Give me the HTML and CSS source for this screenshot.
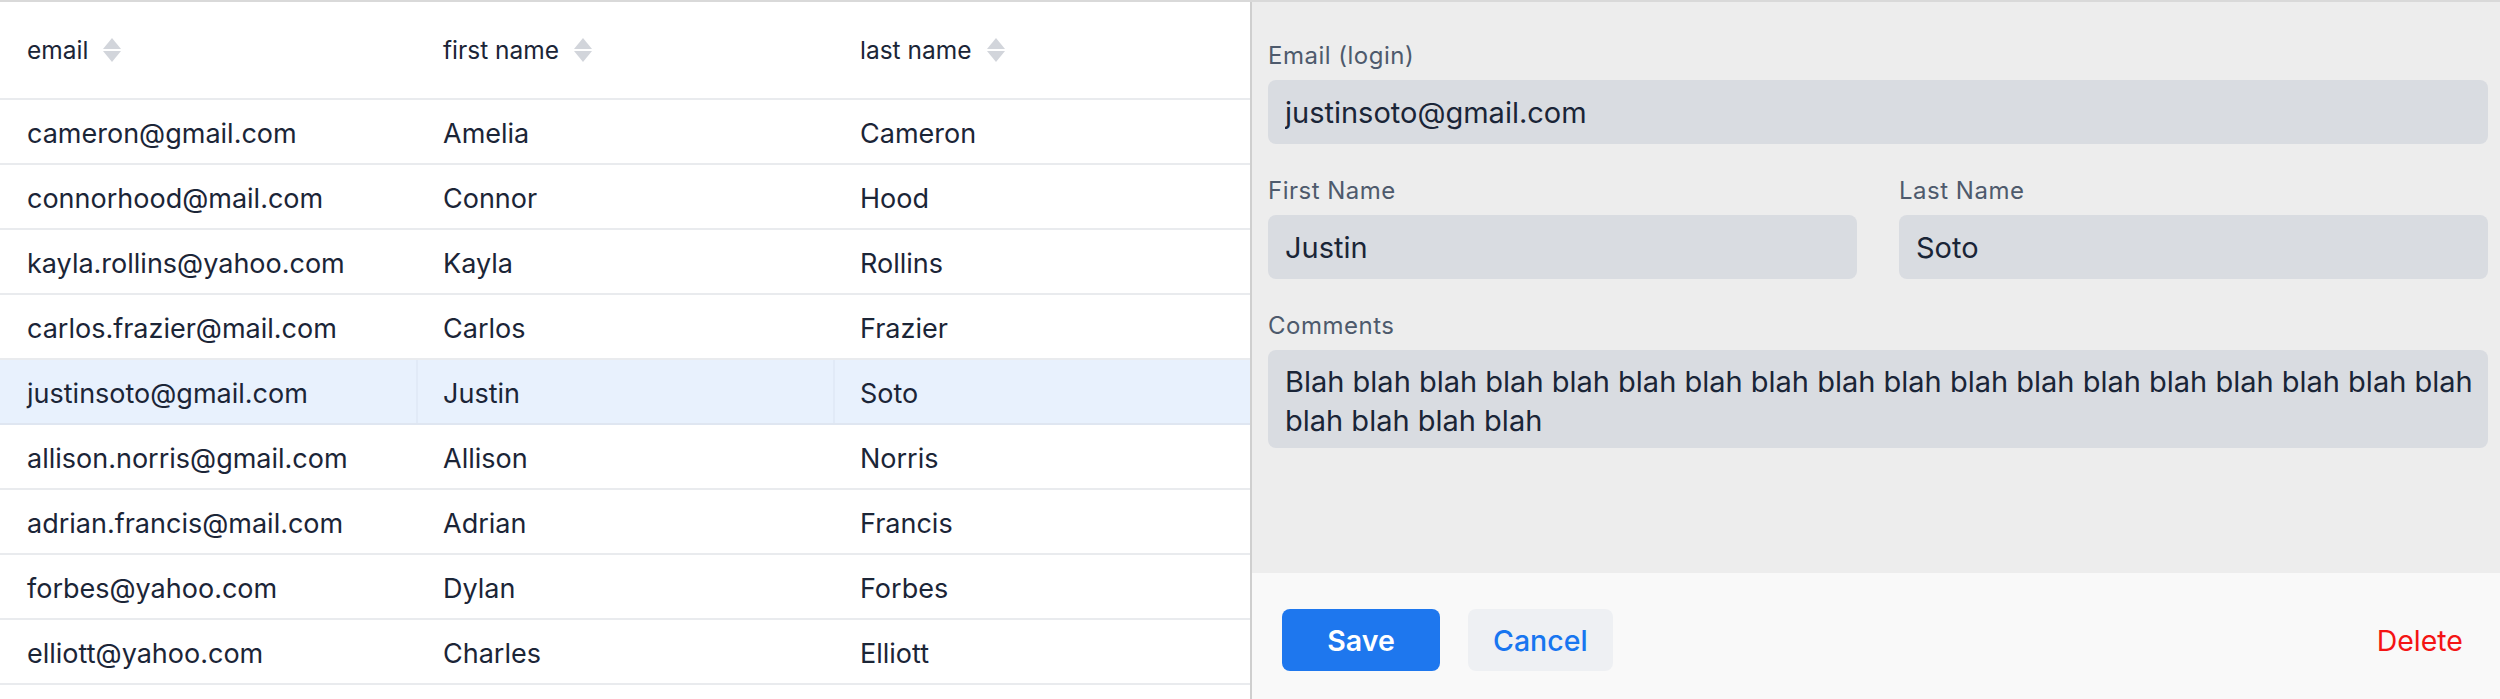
FILE: index.html
```html
<!DOCTYPE html>
<html lang="en">
<head>
<meta charset="utf-8">
<title>Users CRUD</title>
<link rel="stylesheet" href="styles.css">
</head>
<body>
<div class="page">
  <div class="grid">
    <div class="row head">
      <div class="cell"><span class="hlabel">email</span><svg class="sorter" viewBox="0 0 18 24"><polygon points="9,0 18,11 0,11"/><polygon points="0,13 18,13 9,24"/></svg></div>
      <div class="cell"><span class="hlabel">first name</span><svg class="sorter" viewBox="0 0 18 24"><polygon points="9,0 18,11 0,11"/><polygon points="0,13 18,13 9,24"/></svg></div>
      <div class="cell"><span class="hlabel">last name</span><svg class="sorter" viewBox="0 0 18 24"><polygon points="9,0 18,11 0,11"/><polygon points="0,13 18,13 9,24"/></svg></div>
    </div>
    <div class="row"><div class="cell">cameron@gmail.com</div><div class="cell">Amelia</div><div class="cell">Cameron</div></div>
    <div class="row"><div class="cell">connorhood@mail.com</div><div class="cell">Connor</div><div class="cell">Hood</div></div>
    <div class="row"><div class="cell">kayla.rollins@yahoo.com</div><div class="cell">Kayla</div><div class="cell">Rollins</div></div>
    <div class="row"><div class="cell">carlos.frazier@mail.com</div><div class="cell">Carlos</div><div class="cell">Frazier</div></div>
    <div class="row selected"><div class="cell">justinsoto@gmail.com</div><div class="cell">Justin</div><div class="cell">Soto</div></div>
    <div class="row"><div class="cell">allison.norris@gmail.com</div><div class="cell">Allison</div><div class="cell">Norris</div></div>
    <div class="row"><div class="cell">adrian.francis@mail.com</div><div class="cell">Adrian</div><div class="cell">Francis</div></div>
    <div class="row"><div class="cell">forbes@yahoo.com</div><div class="cell">Dylan</div><div class="cell">Forbes</div></div>
    <div class="row"><div class="cell">elliott@yahoo.com</div><div class="cell">Charles</div><div class="cell">Elliott</div></div>
  </div>
  <div class="editor">
    <div class="editor-body">
      <div class="form">
        <div class="field">
          <label class="label" for="email">Email (login)</label>
          <input class="input" id="email" type="text" value="justinsoto@gmail.com">
        </div>
        <div class="pair">
          <div class="field">
            <label class="label" for="first">First Name</label>
            <input class="input" id="first" type="text" value="Justin">
          </div>
          <div class="field">
            <label class="label" for="last">Last Name</label>
            <input class="input" id="last" type="text" value="Soto">
          </div>
        </div>
        <div class="field">
          <label class="label" for="comments">Comments</label>
          <textarea class="input area" id="comments" wrap="off">Blah blah blah blah blah blah blah blah blah blah blah blah blah blah blah blah blah blah
blah blah blah blah</textarea>
        </div>
      </div>
    </div>
    <div class="footer">
      <button class="btn primary" type="button">Save</button>
      <button class="btn secondary" type="button">Cancel</button>
      <button class="btn danger" type="button">Delete</button>
    </div>
  </div>
</div>
</body>
</html>
```
FILE: styles.css
```css
html, body {
  margin: 0;
  padding: 0;
  background: #ffffff;
}

body {
  font-family: Inter, "Noto Sans", "Liberation Sans", sans-serif;
  color: #1b2537;
}

.page {
  display: flex;
  height: 699px;
  border-top: 2px solid #d9d9d9;
  box-sizing: border-box;
  overflow: hidden;
}

/* ---------- grid ---------- */
.grid {
  width: 1250px;
  flex: none;
  background: #ffffff;
}

.row {
  display: grid;
  grid-template-columns: 416px 417px 417px;
  height: 65px;
  border-bottom: 2px solid #e9ebee;
  box-sizing: border-box;
}

.row.head {
  height: 98px;
}

.cell {
  display: flex;
  align-items: center;
  padding-left: 27px;
  padding-top: 3px;
  font-size: 27px;
  white-space: nowrap;
  overflow: hidden;
  box-sizing: border-box;
}

.row.head .cell {
  font-size: 24.5px;
  padding-top: 0;
}

.hlabel {
  color: #1b2537;
}

.sorter {
  width: 18px;
  height: 24px;
  margin-left: 15px;
  fill: #d2d5db;
}

.row.selected {
  background: #e8f1fd;
  border-bottom-color: #dfe6f1;
}

.row.selected .cell + .cell {
  border-left: 2px solid #e1eaf7;
  padding-left: 25px;
}

/* ---------- editor ---------- */
.editor {
  flex: 1;
  display: flex;
  flex-direction: column;
  border-left: 2px solid #cfcfcf;
}

.editor-body {
  flex: 1;
  background: #ededed;
  padding: 37px 12px 0 16px;
}

.form {
  display: flex;
  flex-direction: column;
  gap: 30px;
}

.pair {
  display: grid;
  grid-template-columns: 1fr 1fr;
  gap: 42px;
}

.field {
  display: flex;
  flex-direction: column;
}

.label {
  font-size: 24px;
  font-weight: 400;
  letter-spacing: 0.5px;
  line-height: 34px;
  margin-bottom: 7px;
  color: #4e5a6c;
}

.input {
  height: 64px;
  border: none;
  border-radius: 8px;
  background: #d9dce1;
  padding: 0 17px;
  font-family: inherit;
  font-size: 29px;
  color: #1a2537;
  box-sizing: border-box;
  outline: none;
  width: 100%;
}

.area {
  height: 98px;
  padding: 12px 4px 8px 17px;
  line-height: 39px;
  resize: none;
  overflow: hidden;
  white-space: pre;
}

.footer {
  height: 126px;
  flex: none;
  background: #f9f9f9;
  display: flex;
  align-items: flex-start;
  padding: 36px 12px 0 30px;
  box-sizing: border-box;
}

.btn {
  height: 62px;
  border: none;
  border-radius: 8px;
  font-family: inherit;
  font-size: 28.5px;
  font-weight: 500;
  padding: 0 25px;
  cursor: pointer;
}

.primary {
  width: 158px;
  background: #1e77ee;
  color: #ffffff;
  font-weight: 600;
}

.secondary {
  margin-left: 28px;
  background: #eef0f3;
  color: #1876f0;
}

.danger {
  margin-left: auto;
  background: transparent;
  color: #f41414;
  font-weight: 400;
}
```
